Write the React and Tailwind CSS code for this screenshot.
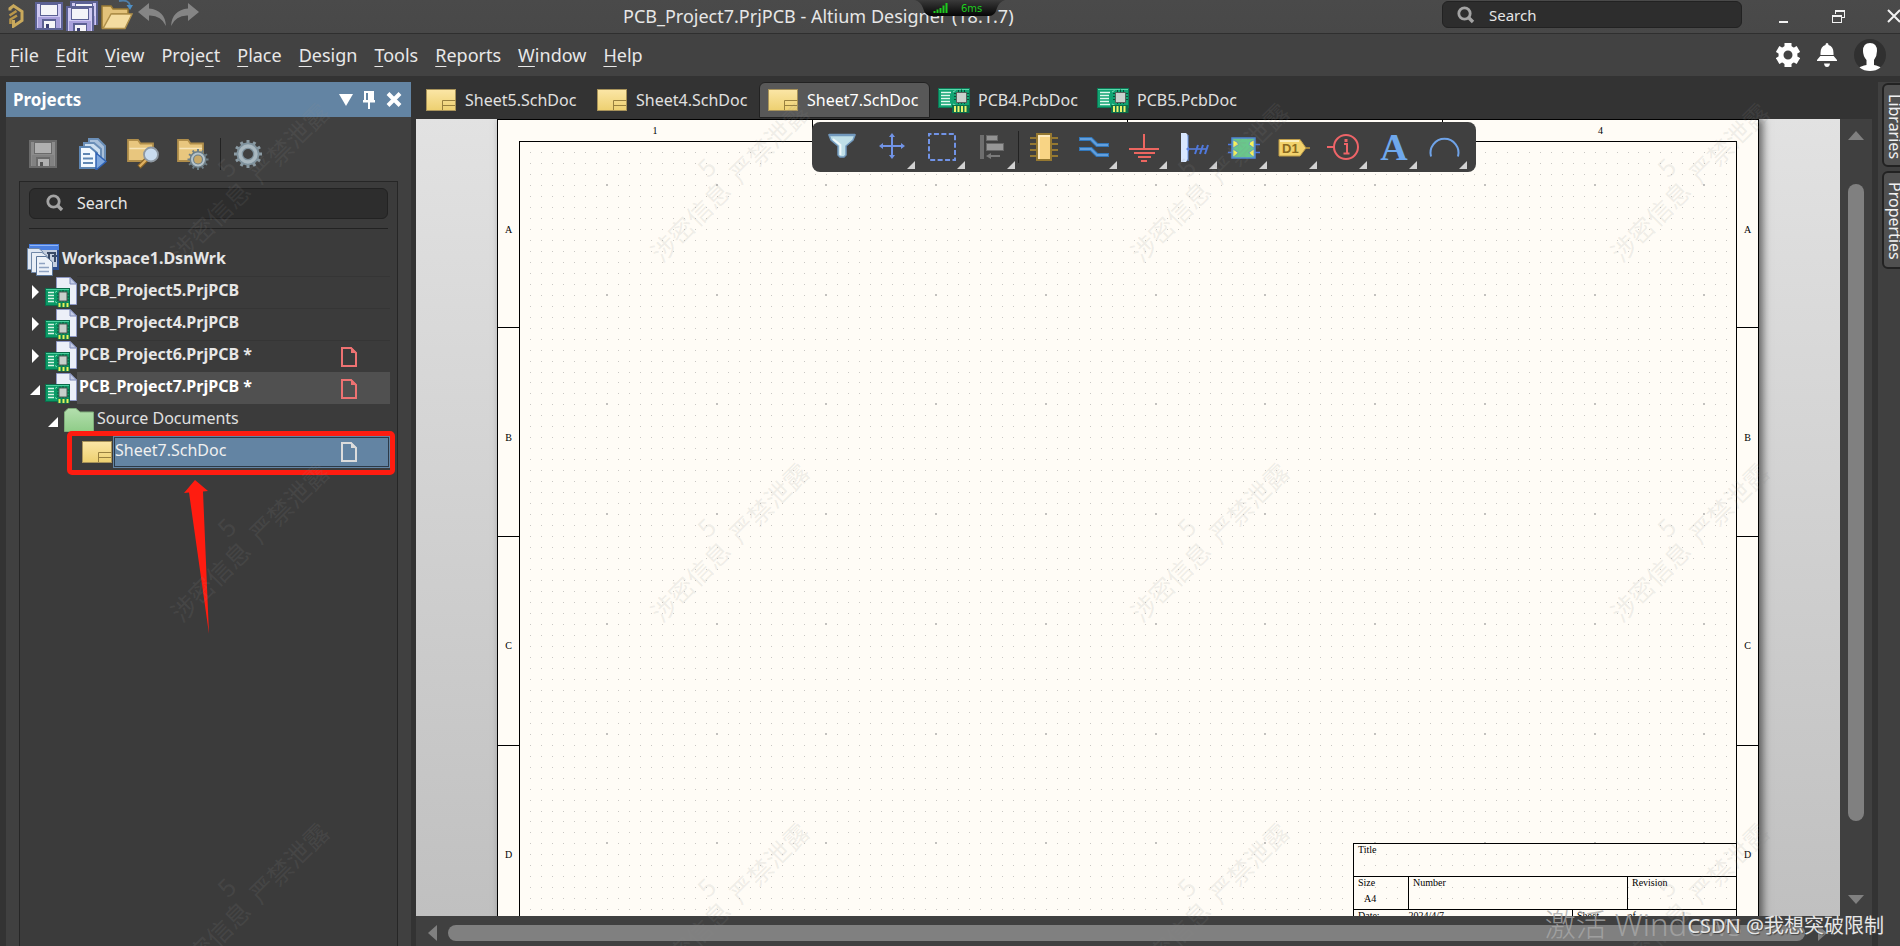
import React from "react";

/* ---------- drawings ---------- */

const Floppy = ({ frame = "#5c6194", body = "#a9a1dc", label = "#f4f4f8", light = "#cfc9f2", dark = "#3c4074" }) => (
  <svg width="28" height="28" viewBox="0 0 28 28" shapeRendering="crispEdges" aria-hidden="true">
    <rect width="28" height="28" fill={frame} />
    <rect x="2" y="2" width="24" height="24" fill={light} />
    <rect x="3" y="15" width="22" height="11" fill={body} />
    <rect x="5" y="2" width="18" height="12" fill={frame} />
    <rect x="6" y="3" width="16" height="10" fill={label} />
    <rect x="7" y="17" width="14" height="10" fill={frame} />
    <rect x="9" y="19" width="11" height="7" fill={label} />
    <rect x="11" y="22" width="3" height="4" fill={dark} />
  </svg>
);

const Magnifier = () => (
  <svg width="18" height="18" viewBox="0 0 18 18" fill="none" aria-hidden="true">
    <circle cx="7.5" cy="7.5" r="5.7" stroke="#a3a3a3" strokeWidth="2.8" />
    <path d="M11.5 11.5 L16 16" stroke="#a3a3a3" strokeWidth="3.4" />
  </svg>
);

const AltiumLogo = () => (
  <svg width="17" height="24" viewBox="0 0 17 24" fill="none" aria-hidden="true">
    <path d="M2 6.500 V4.500 L5.500 1.800 L14 7.500 V16.500 L5.500 22.200 V16" stroke="#c9a95c" strokeWidth="3" />
    <path d="M1.500 11.500 L8.500 7 M2.500 20 V15.500 L9 11.500" stroke="#b8964a" strokeWidth="2.600" />
  </svg>
);

const OpenFolder = () => (
  <svg width="33" height="30" viewBox="0 0 33 30" aria-hidden="true">
    <path d="M1 28 V6 H10 L12 9 H27 V14 H11 L3 28 Z" fill="#e3c27a" stroke="#9a7b35" strokeWidth="1.5" />
    <path d="M2 28.5 L10 14 H31 L24 28.5 Z" fill="#f4dca0" stroke="#b0904b" strokeWidth="1.5" />
    <path d="M18 1 Q28 -1 29 6" fill="none" stroke="#4f7fa8" strokeWidth="1.8" />
    <path d="M25.5 5 H32 L29 10 Z" fill="#4f8fc4" />
  </svg>
);

const Undo = ({ flip }) => (
  <svg width="30" height="24" viewBox="0 0 30 24" aria-hidden="true">
    <path
      transform={flip ? "matrix(-1 0 0 1 30 0)" : undefined}
      d="M1 9 L12 0 V5.5 Q28 7 29 23 Q24 12 12 12.5 V18 Z"
      fill="#858585"
    />
  </svg>
);

const teeth = (cx, cy, r, n, w, len) =>
  Array.from({ length: n }, (_, i) => (
    <rect key={i} x={cx - w / 2} y={cy - r} width={w} height={len} transform={`rotate(${(360 / n) * i} ${cx} ${cy})`} />
  ));

const SilverGear = () => (
  <svg width="30" height="30" viewBox="0 0 30 30" aria-hidden="true">
    <g fill="#8b9ba4">{teeth(15, 15, 14, 12, 3, 5)}</g>
    <circle cx="15" cy="15" r="8.2" fill="none" stroke="#7f929d" strokeWidth="6.4" />
    <circle cx="15" cy="15" r="8" fill="none" stroke="#a9b8c0" strokeWidth="3.4" />
  </svg>
);

const CompileDocs = () => (
  <svg width="30" height="32" viewBox="0 0 30 32" aria-hidden="true">
    <path d="M11 1 H20 L27 8 V22 H11 Z" fill="#a9c0da" stroke="#6b8fb8" strokeWidth="2" />
    <path d="M6 5 H16 L23 11 V26 H6 Z" fill="#cfe0f0" stroke="#6b8fb8" strokeWidth="2" />
    <path d="M2 9 H12 L19 15 V30 H2 Z" fill="#f2f9ff" stroke="#5f87b4" strokeWidth="2" />
    <path d="M5 16 H12 M5 20.500 H15 M5 25 H15" stroke="#5f87b4" strokeWidth="1.800" />
    <path d="M18 15 L28 23.500 L18 32 Z" fill="#7fa8de" stroke="#2f62b4" strokeWidth="1.5" />
  </svg>
);

const FolderBase = () => (
  <path d="M1 23 V2 H11 L13.500 5.500 H26 V23 Z" fill="#e8c67e" stroke="#b08e4b" strokeWidth="1.800" />
);

const FolderSearch = () => (
  <svg width="32" height="32" viewBox="0 0 32 32" aria-hidden="true">
    <FolderBase />
    <path d="M2.500 10.500 H25" stroke="#f7e4b8" strokeWidth="1.500" />
    <path d="M20 21 L12 29" stroke="#8a6427" strokeWidth="4.600" />
    <path d="M20 21 L12.500 28.500" stroke="#e0b060" strokeWidth="2.400" />
    <circle cx="24" cy="16.500" r="7" fill="#c9dcef" stroke="#8e98a2" strokeWidth="1.800" />
  </svg>
);

const FolderGear = () => (
  <svg width="32" height="32" viewBox="0 0 32 32" aria-hidden="true">
    <FolderBase />
    <path d="M2.500 10.500 H25" stroke="#f7e4b8" strokeWidth="1.500" />
    <g fill="#6f7f86">{teeth(21, 21.500, 10.500, 12, 2, 3)}</g>
    <circle cx="21" cy="21.500" r="6.200" fill="#c8a868" stroke="#6d7e87" strokeWidth="4.600" />
    <circle cx="21" cy="21.500" r="6" fill="none" stroke="#b5c3ca" strokeWidth="2" />
  </svg>
);

const SchIcon = () => (
  <svg width="30" height="22" viewBox="0 0 30 22" aria-hidden="true">
    <defs>
      <linearGradient id="sch" x1="0" y1="0" x2="0" y2="1">
        <stop offset="0" stopColor="#fbe6a6" />
        <stop offset="1" stopColor="#edd070" />
      </linearGradient>
    </defs>
    <rect x="0.5" y="0.5" width="29" height="21" fill="url(#sch)" stroke="#a8935a" />
    <path d="M16.500 21 V11.500 H29.500 M16.500 16.500 H29" fill="none" stroke="#98803f" />
  </svg>
);

const Board = () => (
  <g>
    <rect x="0.5" y="0.5" width="24" height="17" fill="#0a9a66" stroke="#0b6b4a" />
    <path d="M1 1.500 H24" stroke="#4fd0a0" />
    <path d="M3 4.500 H9 M3 7.500 H9 M3 10.500 H9 M3 13.500 H9" stroke="#d8f5e6" strokeWidth="1.400" />
    <path d="M10 4.500 L12 3 M10 13.500 L12 15" stroke="#7fe0b8" />
    <path d="M15 2.500 V14 M18 2 V14.500 M21 2.500 V14 M12 6 H24 M12 9 H24 M12 12 H24" stroke="#064a34" />
    <rect x="14" y="4" width="8" height="9" fill="#c7cfcb" stroke="#4c5a54" />
    <rect x="12.500" y="14.500" width="12" height="5" fill="#0b7a4f" />
    <path d="M14.500 15 V19 M18.500 15 V19 M22.500 15 V19" stroke="#e6f25a" strokeWidth="2" />
  </g>
);

const PcbIcon = () => (
  <svg width="32" height="25" viewBox="0 0 32 25" aria-hidden="true">
    <rect x="0.500" y="0.500" width="31" height="19" fill="#12a473" stroke="#0b7a55" />
    <path d="M1 1.500 H31" stroke="#5ad8ac" />
    <path d="M3 4.500 H13 M3 7.500 H12 M3 10.500 H12 M3 13.500 H12 M3 16.500 H13" stroke="#e2f8ee" strokeWidth="1.400" />
    <path d="M15 4 L17.500 2.500 M15 16 L18 17.500" stroke="#7fe0b8" />
    <path d="M20.500 2 V16 M23.500 1.500 V16 M26.500 2 V16 M16 5.500 H31 M16 8.500 H31 M16 11.500 H31" stroke="#07513a" />
    <rect x="18.500" y="4.500" width="10" height="10" fill="#c9d1cd" stroke="#55635d" />
    <rect x="14" y="17" width="17.500" height="8" fill="#0b6f4a" />
    <path d="M17 18 V24 M20.500 18 V24 M24 18 V24 M27.500 18 V24" stroke="#e9f46a" strokeWidth="2" />
  </svg>
);

const ProjectIcon = () => (
  <svg width="32" height="31" viewBox="0 0 32 31" aria-hidden="true">
    <path d="M11.500 0.500 H25 L31.500 7 V27.500 H11.500 Z" fill="#eceff8" stroke="#8d97c4" />
    <path d="M25 0.500 V7 H31.500 Z" fill="#c3cbe6" stroke="#7d88b8" />
    <g transform="translate(0 11)">
      <Board />
    </g>
  </svg>
);

const WorkspaceIcon = () => (
  <svg width="32" height="32" viewBox="0 0 32 32" aria-hidden="true">
    <rect x="2" y="0" width="30" height="26" fill="#2d4d8c" />
    <rect x="2" y="0" width="30" height="6" fill="#4a7fe0" />
    <path d="M3 1.500 H31" stroke="#8fb4f5" />
    <rect x="4" y="6" width="26" height="17" fill="#c4cede" />
    <path d="M20 9 H28 V18 M22 8 V20 M25 12 H30" stroke="#3a4a66" strokeWidth="2" fill="none" />
    <path d="M0.500 4.500 H12 L16 8 V25.500 H0.500 Z" fill="#dfe7f2" stroke="#7088a8" />
    <path d="M4.500 8.500 H15 L20 12 V28.500 H4.500 Z" fill="#e8eef6" stroke="#7088a8" />
    <path d="M9.500 12.500 H19 L25.500 18 V31.500 H9.500 Z" fill="#edf2f9" stroke="#5b769a" />
    <path d="M12 19.500 H18 M12 23.500 H22 M12 27.500 H22" stroke="#8fa3c2" strokeWidth="1.500" />
  </svg>
);

const GreenFolder = () => (
  <svg width="30" height="24" viewBox="0 0 30 24" aria-hidden="true">
    <defs>
      <linearGradient id="gf" x1="0" y1="0" x2="0" y2="1">
        <stop offset="0" stopColor="#b4dfae" />
        <stop offset="1" stopColor="#8fcc88" />
      </linearGradient>
    </defs>
    <path d="M0.500 23.500 V4 L4 0.500 H12 L16 4 H29.500 V23.500 Z" fill="url(#gf)" stroke="#7fae7a" />
  </svg>
);

const DocMark = ({ color }) => (
  <svg width="16" height="20" viewBox="0 0 16 20" aria-hidden="true">
    <path d="M1 1 H10 L15 6 V19 H1 Z" fill="none" stroke={color} strokeWidth="2" />
    <path d="M10 0 V6 H16 Z" fill={color} />
  </svg>
);

const Closed = () => (
  <svg width="7" height="14" viewBox="0 0 7 14" aria-hidden="true">
    <path d="M0 0 L7 7 L0 14 Z" fill="#fff" />
  </svg>
);
const Opened = () => (
  <svg width="10" height="10" viewBox="0 0 10 10" aria-hidden="true">
    <path d="M10 0 V10 H0 Z" fill="#fff" />
  </svg>
);

const Glyph = ({ children }) => (
  <svg width="34" height="34" viewBox="0 0 34 34" fill="none" aria-hidden="true">
    {children}
  </svg>
);

const TOOLS = [
  {
    label: "Filter",
    plain: true,
    draw: (
      <Glyph>
        <path d="M4 6 H30 L28 11 L21 17 V26 L19 28 H15 L13 26 V17 L6 11 Z" fill="#bfdfe8" stroke="#7299bd" strokeWidth="1.500" />
        <path d="M4 6 H30" stroke="#7299bd" strokeWidth="2.500" />
        <path d="M8 10 L15.500 16 V26" stroke="#eef8fb" strokeWidth="1.800" />
      </Glyph>
    ),
  },
  {
    label: "Move",
    draw: (
      <Glyph>
        <path d="M17 6 V28 M6 17 H28" stroke="#7193e6" strokeWidth="2" />
        <path d="M17 4 L20 8 H14 Z M17 30 L20 26 H14 Z M4 17 L8 14 V20 Z M30 17 L26 14 V20 Z" fill="#7193e6" />
      </Glyph>
    ),
  },
  {
    label: "Select area",
    draw: (
      <Glyph>
        <rect x="4" y="5" width="26" height="26" stroke="#7193e6" strokeWidth="2" strokeDasharray="5 2.430" strokeDashoffset="2.500" />
      </Glyph>
    ),
  },
  {
    label: "Align",
    draw: (
      <Glyph>
        <rect x="5" y="6" width="4" height="24" fill="#6e6e6e" />
        <rect x="11.500" y="6.500" width="11" height="5" fill="#929292" stroke="#686868" />
        <rect x="11.500" y="14.500" width="17" height="7" fill="#979797" stroke="#686868" />
        <path d="M15 27 H25" stroke="#7a7a7a" strokeWidth="2" />
        <path d="M11 27 L16 24 V30 Z" fill="#7a7a7a" />
      </Glyph>
    ),
  },
  {
    label: "Place part",
    plain: true,
    draw: (
      <Glyph>
        <path d="M3 9 H31 M3 15 H31 M3 21 H31 M3 27 H31" stroke="#957831" strokeWidth="2" />
        <rect x="10" y="5" width="14" height="26" fill="#f8d484" stroke="#957831" strokeWidth="2" />
        <path d="M12 7 V30 M11 7 H23" stroke="#fff0cc" strokeWidth="1.500" />
      </Glyph>
    ),
  },
  {
    label: "Place wire",
    draw: (
      <Glyph>
        <path d="M2 10 H14 L20 16 H32 M2 20 H14 L20 26 H32" stroke="#3277ba" strokeWidth="4" />
        <path d="M3 10 H14 L20 16 H31 M3 20 H14 L20 26 H31" stroke="#629fdd" strokeWidth="1.800" />
      </Glyph>
    ),
  },
  {
    label: "Place ground",
    draw: (
      <Glyph>
        <path d="M17 5 V20 M2 20 H32 M7 24 H28 M11 28 H24 M14 32 H20" stroke="#ec6660" strokeWidth="2" />
      </Glyph>
    ),
  },
  {
    label: "Place harness",
    draw: (
      <Glyph>
        <path d="M4 4 H9 Q11 5 11 8 V30 L9 33 H4 Z" fill="#d8e7ff" />
        <path d="M11 6 V32" stroke="#6b96ea" />
        <path d="M11 20 H30" stroke="#5b82e0" strokeWidth="1.500" />
        <path d="M9 20 L12 17.500 V22.500 Z" fill="#5b82e0" />
        <path d="M18 25 L21 16 M23 25 L26 16 M28 25 L31 16" stroke="#4f78dc" strokeWidth="2" />
      </Glyph>
    ),
  },
  {
    label: "Place sheet symbol",
    draw: (
      <Glyph>
        <path d="M1 15.500 H33 M1 23.500 H33" stroke="#4e79e0" strokeWidth="1.500" />
        <rect x="5" y="9" width="23" height="20" fill="#69c78b" stroke="#4e86d8" strokeWidth="1.500" />
        <path
          d="M6 11 L10 13 L11.500 15.500 L6 19 Z M6 20 L11 23.500 L9 26 L6 28 Z M27 11 L23 13 L22 15.500 L27 19 Z M27 20 L22 23.500 L24 26 L27 28 Z"
          fill="#f7f45a"
          stroke="#4e86d8"
          strokeWidth="0.700"
        />
      </Glyph>
    ),
  },
  {
    label: "Place port",
    draw: (
      <Glyph>
        <path d="M26 19 H33" stroke="#a3853c" strokeWidth="2" />
        <path d="M2 10.500 H23 L29 19 L23 27 H2 Z" fill="#f2d26c" stroke="#bd9c49" />
        <path d="M3 12 H22" stroke="#fbeebc" strokeWidth="2" />
        <text x="5" y="24" fontFamily="Liberation Sans, sans-serif" fontWeight="700" fontSize="13" fill="#8a6a20">
          D1
        </text>
      </Glyph>
    ),
  },
  {
    label: "Place directive",
    draw: (
      <Glyph>
        <circle cx="19" cy="18" r="12" stroke="#ee6468" strokeWidth="2" />
        <path d="M0 18 H7" stroke="#ee6468" strokeWidth="2" />
        <path d="M17 15 H20 V24 M16.500 24.500 H22.500" stroke="#ee6468" strokeWidth="2" />
        <rect x="17.500" y="10" width="3" height="3" fill="#ee6468" />
      </Glyph>
    ),
  },
  {
    label: "Place text",
    draw: (
      <Glyph>
        <text x="17" y="31" textAnchor="middle" fontFamily="Liberation Serif, serif" fontWeight="700" fontSize="38" fill="#6fa8ec">
          A
        </text>
      </Glyph>
    ),
  },
  {
    label: "Place arc",
    draw: (
      <Glyph>
        <path d="M4 27.500 A14 14 0 1 1 31 27.500" stroke="#6fa3e8" strokeWidth="2" />
      </Glyph>
    ),
  },
];

/* ---------- top bars ---------- */

const TitleBar = () => (
  <header className="relative flex h-[33px] shrink-0 items-start justify-between bg-linear-to-b from-[#4a4a4a] to-[#484848]">
    <div className="flex items-start gap-[3px] pl-2">
      <button aria-label="Altium" className="mt-1 mr-[7px]"><AltiumLogo /></button>
      <button aria-label="Save" className="mt-0.5"><Floppy /></button>
      <button aria-label="Save all" className="relative h-8 w-8">
        <span className="absolute top-px right-0 h-6 overflow-hidden"><Floppy /></span>
        <span className="absolute top-1.5 left-0 h-[25px] overflow-hidden"><Floppy /></span>
      </button>
      <button aria-label="Open"><OpenFolder /></button>
      <button aria-label="Undo" className="mt-[3px]"><Undo /></button>
      <button aria-label="Redo" className="mt-[3px]"><Undo flip /></button>
    </div>
    <h1 className="absolute top-1 left-[623px] text-lg leading-6 whitespace-nowrap text-[#e6e6e6]">
      PCB_Project7.PrjPCB - Altium Designer (18.1.7)
    </h1>
    <div className="absolute top-0 left-[915px] h-4 w-[90px]">
      <svg className="absolute inset-0" width="90" height="16" viewBox="0 0 90 16" aria-hidden="true">
        <defs>
          <linearGradient id="ping" x1="0" y1="0" x2="0" y2="1">
            <stop offset="0" stopColor="#3a3a3a" />
            <stop offset="1" stopColor="#050505" />
          </linearGradient>
        </defs>
        <path d="M0 0 H90 Q84 2 82 8 Q80 16 74 16 H16 Q10 16 8 8 Q6 2 0 0 Z" fill="url(#ping)" />
        <path d="M19.500 13 V11 M22.500 13 V9.500 M25.500 13 V8 M28.500 13 V5.500 M31.500 13 V3" stroke="#1ecb1e" strokeWidth="2" />
      </svg>
      <span className="absolute top-0.5 left-[46px] font-['DejaVu_Sans'] text-[10px] leading-[14px] text-[#1ecb1e]">6ms</span>
    </div>
    <div className="flex items-start">
      <label className="mt-px mr-[158px] flex h-[27px] w-[300px] items-center gap-[14px] rounded-md border border-[#222] bg-[#2d2d2d] pl-[14px]">
        <Magnifier />
        <input aria-label="Search" placeholder="Search" className="w-48 bg-transparent text-[15px] leading-5 text-[#e6e6e6] outline-none placeholder:text-[#e6e6e6]" />
      </label>
      <div className="absolute top-0 right-0 flex h-8 items-center overflow-hidden">
        <button aria-label="Minimize" className="mr-[44px]">
          <svg width="9" height="14" viewBox="0 0 9 14" aria-hidden="true"><path d="M0 13 H9" stroke="#f2f2f2" strokeWidth="2" /></svg>
        </button>
        <button aria-label="Restore" className="mr-[42px]">
          <svg width="13" height="13" viewBox="0 0 13 13" fill="none" shapeRendering="crispEdges" aria-hidden="true">
            <path d="M3.500 4 V0.500 H12.500 V7.500 H10" stroke="#f2f2f2" /><path d="M3 1.500 H13" stroke="#f2f2f2" />
            <rect x="0.500" y="5.500" width="9" height="7" stroke="#f2f2f2" /><path d="M0 6.500 H10" stroke="#f2f2f2" />
          </svg>
        </button>
        <button aria-label="Close" className="w-[13px] overflow-hidden">
          <svg width="14" height="14" viewBox="0 0 14 14" aria-hidden="true"><path d="M1 1 L13 13 M13 1 L1 13" stroke="#f2f2f2" strokeWidth="2" /></svg>
        </button>
      </div>
    </div>
  </header>
);

const MENUS = [
  ["", "F", "ile"],
  ["", "E", "dit"],
  ["", "V", "iew"],
  ["Proje", "c", "t"],
  ["", "P", "lace"],
  ["", "D", "esign"],
  ["", "T", "ools"],
  ["", "R", "eports"],
  ["", "W", "indow"],
  ["", "H", "elp"],
];

const MenuBar = () => (
  <nav className="flex h-[43px] shrink-0 items-center justify-between border-t border-[#2f2f2f] bg-[#424242]">
    <div className="flex items-center gap-[17px] pl-[10px]">
      {MENUS.map(([a, k, b]) => (
        <button key={a + k + b} className="text-lg leading-6 text-[#e8e8e8]">
          {a}<span className="underline decoration-1 underline-offset-4">{k}</span>{b}
        </button>
      ))}
    </div>
    <div className="flex items-center pr-[14px]">
      <button aria-label="Settings" className="mr-[17px]">
        <svg width="24" height="24" viewBox="0 0 24 24" aria-hidden="true">
          <g fill="#fff">{teeth(12, 12, 12, 6, 7, 6)}</g>
          <circle cx="12" cy="12" r="7" fill="none" stroke="#fff" strokeWidth="5" />
        </svg>
      </button>
      <button aria-label="Notifications" className="mr-[17px]">
        <svg width="20" height="24" viewBox="0 0 20 24" fill="#fff" aria-hidden="true">
          <path d="M10 0 Q11.500 0 11.500 2 Q16.500 3.500 16.500 10 V12 H3.500 V10 Q3.500 3.500 8.500 2 Q8.500 0 10 0 Z M3.300 13 H16.700 L20 17 V18 H0 V17 Z M7 20.500 H13 Q12.500 24 10 24 Q7.500 24 7 20.500 Z" />
        </svg>
      </button>
      <button aria-label="Account">
        <svg width="32" height="32" viewBox="0 0 32 32" aria-hidden="true">
          <circle cx="16" cy="16" r="16" fill="#303030" />
          <path d="M16 4 Q23 4 23 12 Q23 17 20 21 V26 Q25 27 26.500 28.500 Q22 32 16 32 Q10 32 5.500 28.500 Q7 27 12.500 26 V21 Q9 17 9 12 Q9 4 16 4 Z" fill="#fff" />
        </svg>
      </button>
    </div>
  </nav>
);

/* ---------- projects panel ---------- */

const PROJECTS = [
  { name: "PCB_Project5.PrjPCB" },
  { name: "PCB_Project4.PrjPCB" },
  { name: "PCB_Project6.PrjPCB *", modified: true },
  { name: "PCB_Project7.PrjPCB *", modified: true, open: true },
];

const ProjectRow = ({ name, modified, open }) => (
  <li className="flex h-8 items-center">
    <button aria-label={"Toggle " + name} className={open ? "ml-[10px] mr-[5px] pt-1" : "ml-3 mr-[6px]"}>
      {open ? <Opened /> : <Closed />}
    </button>
    <ProjectIcon />
    <div className={"flex h-8 flex-1 items-center justify-between border-t pr-[33px] pl-0.5 " + (open ? "border-[#505050] bg-[#505050] text-white" : "border-[#353535] text-[#e6e6e6]")}>
      <span className="pb-1.5 text-base font-bold">{name}</span>
      {modified && <DocMark color="#ee7272" />}
    </div>
  </li>
);

const ProjectsPanel = () => (
  <aside className="ml-1.5 flex w-[405px] shrink-0 flex-col bg-[#404040]">
    <div className="flex h-[35px] shrink-0 items-center bg-[#6384a3] pr-[9px] pl-[7px]">
      <h2 className="flex-1 text-[17px] leading-6 font-bold text-white">Projects</h2>
      <button aria-label="Panel menu" className="mr-[10px]">
        <svg width="14" height="12" viewBox="0 0 14 12" aria-hidden="true"><path d="M0 0 H14 L7 12 Z" fill="#fff" /></svg>
      </button>
      <button aria-label="Pin" className="mr-[11px]">
        <svg width="12" height="18" viewBox="0 0 12 18" fill="#fff" aria-hidden="true">
          <path fillRule="evenodd" d="M1 0 H11 V9 H12 V11.500 H7 V18 H5 V11.500 H0 V9 H1 Z M3 2 V9 H5 V2 Z" />
        </svg>
      </button>
      <button aria-label="Close panel">
        <svg width="16" height="15" viewBox="0 0 16 15" aria-hidden="true"><path d="M2 1.500 L14 13.500 M14 1.500 L2 13.500" stroke="#fff" strokeWidth="4" /></svg>
      </button>
    </div>
    <div className="flex h-16 shrink-0 items-center gap-[18px] pt-[10px] pl-[21px]">
      <button aria-label="Save" className="flex w-8 justify-center"><Floppy frame="#6b6b6b" body="#828282" label="#b0b0b0" light="#8c8c8c" dark="#555" /></button>
      <button aria-label="Compile" className="flex w-8 justify-center"><CompileDocs /></button>
      <button aria-label="Explore" className="flex w-8 justify-center"><FolderSearch /></button>
      <div className="flex items-center gap-[11px]">
        <button aria-label="Project options" className="flex w-8 justify-center"><FolderGear /></button>
        <div className="h-8 w-px bg-[#222]" />
        <button aria-label="Settings" className="flex w-8 justify-center"><SilverGear /></button>
      </div>
    </div>
    <div className="mr-[13px] ml-[13px] flex-1 border border-b-0 border-[#262626] bg-[#3b3b3b] px-[9px] pt-1.5">
      <label className="flex h-[31px] items-center gap-[13px] rounded-md border border-[#222] bg-[#2d2d2d] pb-px pl-4">
        <Magnifier />
        <input aria-label="Search projects" placeholder="Search" className="w-60 bg-transparent text-base leading-6 text-[#e6e6e6] outline-none placeholder:text-[#e6e6e6]" />
      </label>
      <div className="mt-[9px] h-px bg-[#222]" />
      <ul className="-mr-0.5 -ml-[9px] pt-[15px]">
        <li className="flex h-8 items-center pl-[7px]">
          <WorkspaceIcon />
          <span className="pb-1 pl-[3px] text-base font-bold text-[#e6e6e6]">Workspace1.DsnWrk</span>
        </li>
        {PROJECTS.map((p) => <ProjectRow key={p.name} {...p} />)}
        <li className="flex h-8 items-center pl-7">
          <button aria-label="Toggle Source Documents" className="mr-1.5 pt-1"><Opened /></button>
          <GreenFolder />
          <span className="pb-1 pl-[3px] text-base text-[#e0e0e0]">Source Documents</span>
        </li>
        <li className="relative flex h-8 items-center pl-[62px]">
          <SchIcon />
          <div className="ml-px flex h-8 flex-1 border border-[#6384a3] bg-[#2c3a48] p-px">
            <div className="flex flex-1 items-center justify-between bg-[#6384a3] pr-[31px]">
              <span className="pb-1 text-base text-[#f0f0f0]">Sheet7.SchDoc</span>
              <DocMark color="#dcdcdc" />
            </div>
          </div>
          <div className="pointer-events-none absolute -top-[5px] -right-[5px] left-[47px] h-11 rounded-[5px] border-[5px] border-[#ff1c10]" />
          <svg className="pointer-events-none absolute top-11 left-[164px]" width="26" height="155" viewBox="0 0 26 155" aria-hidden="true">
            <path d="M11 0 L24 11 L19 11.500 L25 154 L5 12.500 L0 13 Z" fill="#ff1c10" />
          </svg>
        </li>
      </ul>
    </div>
  </aside>
);

/* ---------- editor ---------- */

const TABS = [
  { name: "Sheet5.SchDoc" },
  { name: "Sheet4.SchDoc" },
  { name: "Sheet7.SchDoc", active: true },
  { name: "PCB4.PcbDoc", pcb: true },
  { name: "PCB5.PcbDoc", pcb: true },
];

const Tab = ({ name, active, pcb }) => (
  <button
    className={
      "flex h-9 items-center rounded-t-md border text-base " +
      (pcb ? "w-[159px] gap-2 pl-[7px] " : "w-[171px] gap-[9px] pl-2 ") +
      (active ? "border-[#222] bg-[#585858] text-white" : "border-transparent text-[#e0e0e0]")
    }
  >
    {pcb ? <PcbIcon /> : <SchIcon />}
    <span>{name}</span>
  </button>
);

const PITCH = 10.975;
const dotPaths = (() => {
  let small = "";
  let large = "";
  for (let r = 0; r < 71; r++) {
    for (let c = 0; c < 110; c++) {
      const x = Math.round(10 + c * PITCH);
      const y = Math.round(10 + r * PITCH);
      if (c % 10 === 7 && r % 10 === 3) large += `M${x - 1} ${y - 1}h2v2h-2z`;
      else small += `M${x} ${y}h1v1h-1z`;
    }
  }
  return { small, large };
})();

const cell = "border border-black px-1 align-top font-normal text-left";

const TitleBlock = () => (
  <table className="absolute top-[701px] -right-px w-[383px] table-fixed border-collapse text-[10px] leading-3 text-black">
    <colgroup>
      <col className="w-[55px]" />
      <col className="w-[164px]" />
      <col className="w-[55px]" />
      <col className="w-[109px]" />
    </colgroup>
    <tbody>
      <tr className="h-[33px]"><td colSpan={4} className={cell}>Title</td></tr>
      <tr className="h-[33px]">
        <td className={cell}>Size<div className="mt-1 pl-1.5">A4</div></td>
        <td colSpan={2} className={cell}>Number</td>
        <td className={cell}>Revision</td>
      </tr>
      <tr className="h-[33px]">
        <td className="border-l border-black px-1 align-top">Date:</td>
        <td className="align-top">2024/4/7</td>
        <td className="border-l border-black px-1 align-top">Sheet</td>
        <td className="border-r border-black align-top">of</td>
      </tr>
    </tbody>
  </table>
);

const ZoneRows = () => (
  <div className="flex w-[21px] shrink-0 flex-col pr-px text-center text-[10px] leading-3 text-black">
    <div className="-mr-px flex h-[208px] items-center justify-center border-b border-black pt-3">A</div>
    <div className="-mr-px flex h-[209px] items-center justify-center border-b border-black pt-3">B</div>
    <div className="-mr-px flex h-[209px] items-center justify-center border-b border-black pt-[10px]">C</div>
    <div className="-mr-px flex h-[209px] items-center justify-center pt-2">D</div>
  </div>
);

const Sheet = () => (
  <div className="ml-[81px] flex h-[830px] w-[1262px] flex-col border border-black bg-[#fffcf6] font-['Liberation_Serif',serif] shadow-[4px_0_8px_#0000008c]">
    <div className="grid h-[21px] shrink-0 grid-cols-4 text-center text-[10px] leading-[21px] text-black">
      <div className="border-r border-black">1</div>
      <div className="border-r border-black">2</div>
      <div className="border-r border-black">3</div>
      <div>4</div>
    </div>
    <div className="-mt-[21px] flex flex-1">
      <ZoneRows />
      <div className="relative mt-[21px] flex-1 border border-b-0 border-black">
        <svg className="absolute inset-0" width="1216" height="790" viewBox="0 0 1216 790" shapeRendering="crispEdges" aria-hidden="true">
          <path d={dotPaths.small} fill="#c9c7c3" />
          <path d={dotPaths.large} fill="#c3c1be" />
        </svg>
        <TitleBlock />
      </div>
      <ZoneRows />
    </div>
  </div>
);

const ActiveBar = () => (
  <div className="absolute top-[3px] left-[396px] flex h-[50px] items-center rounded-lg bg-[#404040] pr-[7px] pl-[5px]">
    {TOOLS.map((t, i) => (
      <React.Fragment key={t.label}>
        {i === 4 && <div className="ml-px h-8 w-px bg-[#222]" />}
        <button aria-label={t.label} className="relative flex h-[50px] w-[50px] items-center justify-center pb-0.5">
          {t.draw}
          {!t.plain && (
            <svg className="absolute right-0.5 bottom-[3px]" width="8" height="8" viewBox="0 0 8 8" aria-hidden="true">
              <path d="M8 0 V8 H0 Z" fill="#d2d2d2" />
            </svg>
          )}
        </button>
      </React.Fragment>
    ))}
  </div>
);

const Arrow = ({ d, w, h, label }) => (
  <button aria-label={label}>
    <svg width={w} height={h} viewBox={`0 0 ${w} ${h}`} aria-hidden="true"><path d={d} fill="#808080" /></svg>
  </button>
);

const Editor = () => (
  <main className="ml-[5px] flex min-w-0 flex-1 flex-col">
    <div className="flex h-[37px] shrink-0 items-start pl-px">
      {TABS.map((t) => <Tab key={t.name} {...t} />)}
    </div>
    <div className="flex min-h-0 flex-1">
      <div className="relative min-w-0 flex-1 overflow-hidden bg-linear-to-b from-[#e2e2e2] to-[#c0c0c0]">
        <Sheet />
        <ActiveBar />
      </div>
      <div className="flex w-8 shrink-0 flex-col items-center bg-[#404040] pt-[12px] pb-3">
        <Arrow label="Scroll up" w={16} h={9} d="M8 0 L16 9 H0 Z" />
        <div className="mt-[44px] mb-[74px] w-4 flex-1 rounded-full bg-[#808080]" />
        <Arrow label="Scroll down" w={16} h={9} d="M8 9 L16 0 H0 Z" />
      </div>
    </div>
    <div className="flex h-[30px] shrink-0 items-center bg-[#404040] pr-[45px] pl-3 pb-px pt-1">
      <Arrow label="Scroll left" w={9} h={16} d="M0 8 L9 0 V16 Z" />
      <div className="mr-[13px] ml-[11px] h-4 flex-1 rounded-full bg-[#808080]" />
      <Arrow label="Scroll right" w={9} h={16} d="M9 8 L0 0 V16 Z" />
    </div>
  </main>
);

const sideTab =
  "w-[26px] rounded-l-md border-2 border-[#222] bg-[#505050] pt-[9px] text-left text-base leading-[22px] whitespace-nowrap text-[#f0f0f0] [writing-mode:vertical-lr]";

const SideRail = () => (
  <div className="flex w-7 shrink-0 flex-col items-start gap-1 overflow-hidden border-l-[6px] border-[#333] bg-[#404040] pt-px pl-1">
    <button className={sideTab + " h-[84px]"}>Libraries</button>
    <button className={sideTab + " h-[98px]"}>Properties</button>
  </div>
);

/* ---------- overlays ---------- */

const Watermarks = () => (
  <div className="pointer-events-none absolute inset-0 overflow-hidden" aria-hidden="true">
    <div className="-mt-2 grid w-[1920px] grid-cols-4">
      {Array.from({ length: 12 }, (_, i) => (
        <div key={i} className="flex h-[360px] items-center justify-center">
          <div className="-rotate-45 text-center font-['Noto_Sans_CJK_SC',sans-serif] text-[25px] leading-[27px] whitespace-nowrap text-[#8c8c8c]/15">
            <div className="pr-3">5</div>
            <div className="flex gap-[11px]">
              <span>涉密信息</span>
              <span>严禁泄露</span>
            </div>
          </div>
        </div>
      ))}
    </div>
  </div>
);

export default function App() {
  return (
    <div className="relative flex h-screen flex-col overflow-hidden bg-[#333] font-['Noto_Sans','Noto_Sans_CJK_SC',sans-serif]">
      <TitleBar />
      <MenuBar />
      <div className="flex min-h-0 flex-1 pt-1.5">
        <ProjectsPanel />
        <Editor />
        <SideRail />
      </div>
      <Watermarks />
      <p className="pointer-events-none absolute right-[158px] bottom-0.5 text-[31px] leading-10 font-light whitespace-nowrap text-[#a8a8a8]/80">激活 Windows</p>
      <p className="pointer-events-none absolute right-4 bottom-1.5 text-[20px] leading-7 whitespace-nowrap text-[#e6e6e6] [text-shadow:1px_1px_1px_#444]">CSDN @我想突破限制</p>
    </div>
  );
}
